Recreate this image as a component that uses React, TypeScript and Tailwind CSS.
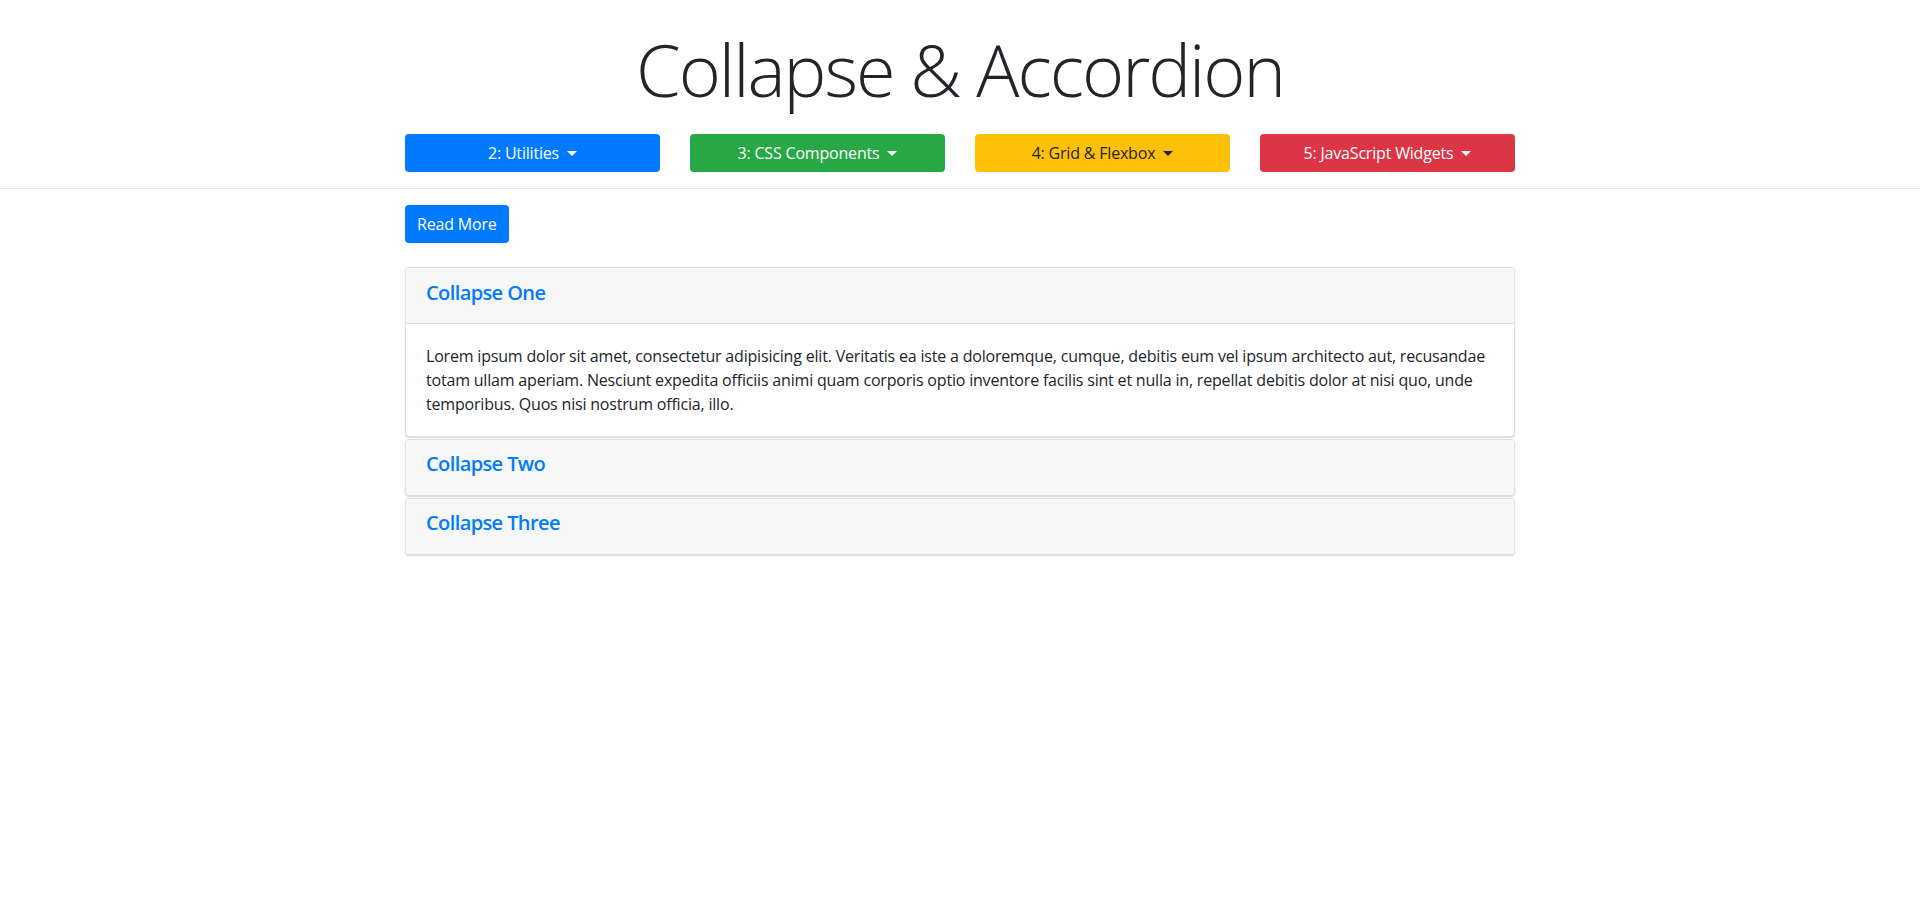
import React from "react";

const font = { fontFamily: '"Open Sans", "Noto Sans", sans-serif' };

function Caret({ dark }: { dark?: boolean }) {
  return (
    <span
      className={
        dark
          ? "ml-[8px] inline-block h-0 w-0 border-x-[5px] border-t-[5px] border-x-transparent border-t-[#212529]"
          : "ml-[8px] inline-block h-0 w-0 border-x-[5px] border-t-[5px] border-x-transparent border-t-white"
      }
    />
  );
}

function NavButton({ label, cls, dark }: { label: string; cls: string; dark?: boolean }) {
  return (
    <button
      className={
        "flex h-[38px] w-full items-center justify-center rounded-[4px] text-[16px] leading-[24px] tracking-[-0.19px] " + cls
      }
    >
      <span>{label}</span>
      <Caret dark={dark} />
    </button>
  );
}

function Card({ title, open, children }: { title: string; open?: boolean; children?: React.ReactNode }) {
  return (
    <div className="overflow-hidden rounded-[4px] border border-[#dfdfdf] bg-white shadow-[0_1px_2px_rgba(0,0,0,0.16)]">
      <div
        className={
          open
            ? "h-[56px] border-b border-[#dfdfdf] bg-[#f7f7f7] px-5 pt-[13px]"
            : "h-[55px] bg-[#f7f7f7] px-5 pt-3"
        }
      >
        <a className="cursor-pointer text-[20px] font-semibold leading-[24px] tracking-[-0.6px] text-[#007bff]">
          {title}
        </a>
      </div>
      {children}
    </div>
  );
}

export default function App() {
  return (
    <div className="min-h-[904px] bg-white text-[#212529]" style={font}>
      <header className="border-b border-[#e6e6e6] pb-4 pt-[26px]">
        <div className="mx-auto w-[1110px]">
          <h1 className="text-center text-[72px] font-light leading-[86px] tracking-[-2px] text-[#212529]">
            Collapse &amp; Accordion
          </h1>
          <div className="mt-[22px] grid grid-cols-4 gap-[30px]">
            <NavButton label="2: Utilities" cls="bg-[#007bff] text-white" />
            <NavButton label="3: CSS Components" cls="bg-[#28a745] text-white" />
            <NavButton label="4: Grid & Flexbox" cls="bg-[#ffc107] text-[#212529]" dark />
            <NavButton label="5: JavaScript Widgets" cls="bg-[#dc3545] text-white" />
          </div>
        </div>
      </header>
      <main className="mx-auto w-[1110px] pt-4">
        <button className="h-[38px] rounded-[4px] bg-[#007bff] px-3 text-[16px] leading-[24px] tracking-[-0.19px] text-white">
          Read More
        </button>
        <div className="mt-6 flex flex-col gap-[2px]">
          <Card title="Collapse One" open>
            <div className="px-5 py-5 text-[16px] leading-[24px] tracking-[-0.19px]">
              <span className="block whitespace-nowrap">
                Lorem ipsum dolor sit amet, consectetur adipisicing elit. Veritatis ea iste a doloremque, cumque, debitis eum vel ipsum architecto aut, recusandae
              </span>
              <span className="block whitespace-nowrap">
                totam ullam aperiam. Nesciunt expedita officiis animi quam corporis optio inventore facilis sint et nulla in, repellat debitis dolor at nisi quo, unde
              </span>
              <span className="block whitespace-nowrap">temporibus. Quos nisi nostrum officia, illo.</span>
            </div>
          </Card>
          <Card title="Collapse Two" />
          <Card title="Collapse Three" />
        </div>
      </main>
    </div>
  );
}
